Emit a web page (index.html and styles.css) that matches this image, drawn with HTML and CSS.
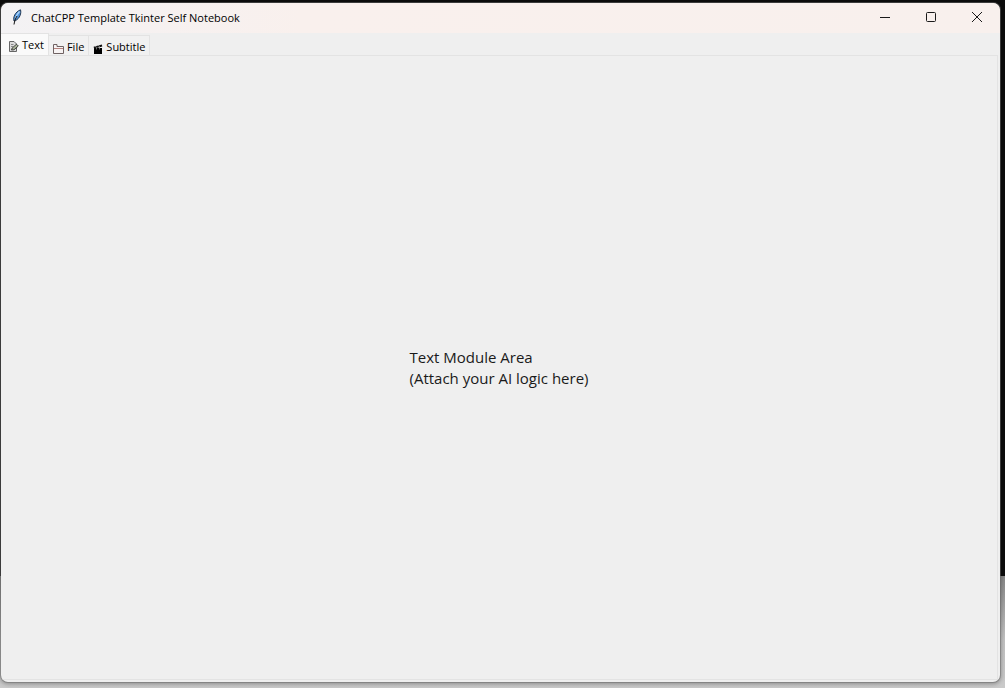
FILE: index.html
```html
<!DOCTYPE html>
<html lang="en">
<head>
    <meta charset="UTF-8">
    <meta name="viewport" content="width=device-width, initial-scale=1.0">
    <title>ChatCPP Template Tkinter Self Notebook</title>
    <link rel="stylesheet" href="styles.css">
</head>
<body>
    <div class="window">
        <header class="titlebar">
            <svg class="app-icon" width="16" height="16" viewBox="0 0 16 16">
                <path d="M5 12C3.800 8.500 6 3 11.500.8c1 3.200-.5 8.500-5 10.800z" fill="#4f94dd" stroke="#1b2c44" stroke-width=".9"/>
                <path d="M10.500 2.500C8.500 4.500 7 7 6.300 9.500" fill="none" stroke="#b4d8f8" stroke-width="1.200"/>
                <path d="M8 7C6.500 9.500 5.500 12 5 15.500" fill="none" stroke="#111" stroke-width="1"/>
            </svg>
            <h1 class="title">ChatCPP Template Tkinter Self Notebook</h1>
            <div class="window-buttons">
                <button type="button" aria-label="Minimize">
                    <svg width="12" height="12" viewBox="0 0 12 12"><path d="M1 6.500h10"/></svg>
                </button>
                <button type="button" aria-label="Maximize">
                    <svg width="12" height="12" viewBox="0 0 12 12"><rect x="1.500" y="1.500" width="9" height="9" rx="1"/></svg>
                </button>
                <button type="button" aria-label="Close">
                    <svg width="12" height="12" viewBox="0 0 12 12"><path d="M1 1l10 10M11 1L1 11"/></svg>
                </button>
            </div>
        </header>

        <div class="tabs" role="tablist">
            <button type="button" class="tab active" role="tab" id="tab-text" aria-selected="true" aria-controls="panel-text">
                <svg width="10" height="11" viewBox="0 0 10 11">
                    <path d="M.5 .5h4.500l2.500 2.500v7.500h-7z" fill="#dcdcdc" stroke="#666"/>
                    <path d="M2 3.500h2.500M2 5.500h2" stroke="#888" fill="none"/>
                    <path d="M2.500 9L3.200 7 7.500 3.200 9.300 5 5 8.800z" fill="#a9b49a" stroke="#222" stroke-width=".8"/>
                </svg>
                Text
            </button>
            <button type="button" class="tab" role="tab" aria-selected="false">
                <svg width="11" height="10" viewBox="0 0 11 10">
                    <path d="M.5 9.500v-9h3.500v2h6.500v7z" fill="#f7f3f3" stroke="#6f6262"/>
                    <path d="M1 4.500h9" stroke="#b5837f"/>
                </svg>
                File
            </button>
            <button type="button" class="tab" role="tab" aria-selected="false">
                <svg width="10" height="10" viewBox="0 0 10 10">
                    <path d="M1 4h8v6H1z" fill="#000"/>
                    <path d="M.6 2.800L8.800.6l.5 2-8.200 2.200z" fill="#111"/>
                    <path d="M2.500 2.200l1 1.500M5.500 1.300l1 1.500M3 4.800h1M6 4.800h1" stroke="#ddd" stroke-width=".7"/>
                </svg>
                Subtitle
            </button>
        </div>

        <main class="panel" role="tabpanel" id="panel-text" aria-labelledby="tab-text">
            <p class="message">Text Module Area<br>(Attach your AI logic here)</p>
        </main>
    </div>
</body>
</html>
```
FILE: styles.css
```css
* {
    box-sizing: border-box;
}
body {
    margin: 0;
    padding: 2px 4px 5px 0;
    height: 100vh;
    display: flex;
    font-family: "Open Sans", "Noto Sans", sans-serif;
    color: #1a1a1a;
    background: linear-gradient(#0c0c0c 576px, #888 576px, #c2c2c2 640px, #cacaca);
}
.window {
    flex: 1;
    display: flex;
    flex-direction: column;
    padding: 0 2px 2px 0;
    border: 1px solid rgba(110, 110, 110, 0.5);
    border-radius: 8px;
    background-color: #efefef;
    background-clip: padding-box;
    overflow: hidden;
    box-shadow: 0 1px 4px rgba(0, 0, 0, 0.3);
}
.titlebar {
    display: flex;
    align-items: center;
    height: 30px;
    margin-right: -2px;
    padding: 0 0 2px 8px;
    background: linear-gradient(90deg, #f3f2f4, #f9f0ed 30%, #f8f0ed);
}
.title {
    flex: 1;
    margin: 0 0 0 6px;
    font-size: 11px;
    font-weight: normal;
    color: #000;
}
.window-buttons {
    display: flex;
    height: 100%;
}
.window-buttons button {
    display: flex;
    align-items: center;
    justify-content: center;
    width: 46px;
    padding: 0;
    border: none;
    background: none;
}
.window-buttons svg {
    fill: none;
    stroke: #1a1a1a;
}
.tabs {
    display: flex;
    align-items: flex-end;
    height: 22px;
}
.tab {
    display: flex;
    align-items: center;
    gap: 3px;
    height: 20px;
    padding: 2px 4px 0;
    border: 1px solid #e3e3e3;
    border-width: 1px 1px 0 0;
    background-color: #f1f1f1;
    font-family: inherit;
    font-size: 11px;
    line-height: 16px;
    color: #000;
}
.tab svg {
    margin-top: 4px;
}
.tab.active {
    height: 22px;
    padding: 0 4px 0 8px;
    background-color: #fafafa;
}
.panel {
    flex: 1;
    display: flex;
    align-items: center;
    justify-content: center;
    border: 1px solid #e3e3e3;
    border-left: none;
}
.message {
    margin: 0;
    font-size: 15px;
    line-height: 21px;
}
```
